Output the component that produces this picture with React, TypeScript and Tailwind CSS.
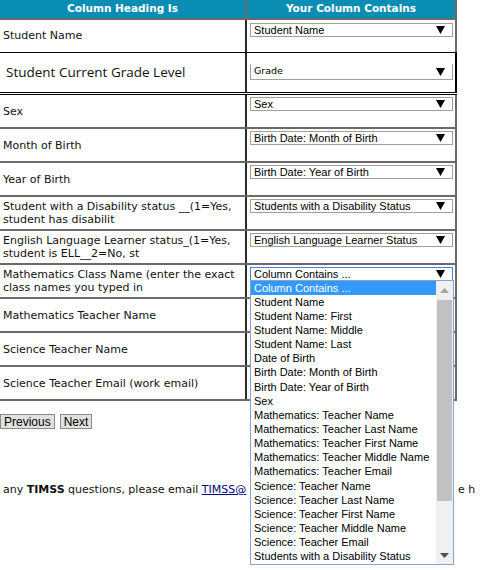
import React from "react";

const verdana = { fontFamily: '"DejaVu Sans", Verdana, sans-serif' };
const arial = { fontFamily: '"Liberation Sans", Arial, sans-serif' };

function Arrow() {
  return (
    <svg width="9" height="8" viewBox="0 0 9 8" className="shrink-0">
      <polygon points="0,0 9,0 4.5,8" fill="#000" />
    </svg>
  );
}

function Sel({ label, focused }: { label: string; focused?: boolean }) {
  return (
    <div
      style={arial}
      className={`flex h-[14px] w-[203px] items-center justify-between bg-white pl-[3px] pr-[7px] text-[11px] leading-none text-black ${
        focused ? "border border-[#4a82d8]" : "border border-[#a0a0a0]"
      }`}
    >
      <span className="whitespace-nowrap">{label}</span>
      <Arrow />
    </div>
  );
}

const rows: { label: React.ReactNode; sel: string }[] = [
  { label: "Sex", sel: "Sex" },
  { label: "Month of Birth", sel: "Birth Date: Month of Birth" },
  { label: "Year of Birth", sel: "Birth Date: Year of Birth" },
  {
    label: (
      <>
        Student with a Disability status __(1=Yes,
        <br />
        student has disabilit
      </>
    ),
    sel: "Students with a Disability Status",
  },
  {
    label: (
      <>
        English Language Learner status_(1=Yes,
        <br />
        student is ELL__2=No, st
      </>
    ),
    sel: "English Language Learner Status",
  },
];

const options = [
  "Column Contains ...",
  "Student Name",
  "Student Name: First",
  "Student Name: Middle",
  "Student Name: Last",
  "Date of Birth",
  "Birth Date: Month of Birth",
  "Birth Date: Year of Birth",
  "Sex",
  "Mathematics: Teacher Name",
  "Mathematics: Teacher Last Name",
  "Mathematics: Teacher First Name",
  "Mathematics: Teacher Middle Name",
  "Mathematics: Teacher Email",
  "Science: Teacher Name",
  "Science: Teacher Last Name",
  "Science: Teacher First Name",
  "Science: Teacher Middle Name",
  "Science: Teacher Email",
  "Students with a Disability Status",
];

function DropList() {
  return (
    <div
      style={arial}
      className="absolute left-0 top-[13px] z-10 flex h-[285px] w-[204px] border border-[#8aa3cc] bg-white text-[11px] text-black"
    >
      <div className="flex flex-1 flex-col">
        {options.map((o, i) => (
          <div
            key={o}
            className={`flex h-[14.15px] items-center whitespace-nowrap pl-[3px] leading-none ${
              i === 0 ? "bg-[#3399ff] text-white" : ""
            }`}
          >
            {o}
          </div>
        ))}
      </div>
      <div className="flex w-[17px] flex-col items-center bg-[#f0f0f0]">
        <div className="flex h-[18px] items-center justify-center">
          <svg width="9" height="5" viewBox="0 0 9 5">
            <polygon points="0,5 9,5 4.5,0" fill="#a3a3a3" />
          </svg>
        </div>
        <div className="mt-[1px] h-[201px] w-[15px] bg-[#c1c1c1]" />
        <div className="flex-1" />
        <div className="flex h-[18px] items-center justify-center">
          <svg width="9" height="5" viewBox="0 0 9 5">
            <polygon points="0,0 9,0 4.5,5" fill="#505050" />
          </svg>
        </div>
      </div>
    </div>
  );
}

function Row({
  label,
  right,
  h,
  leftClass,
}: {
  label: React.ReactNode;
  right: React.ReactNode;
  h: string;
  leftClass?: string;
}) {
  return (
    <div className={`flex ${h} border-b-2 border-[#6a6a6a]`}>
      <div
        style={verdana}
        className={`flex w-[247px] items-center border-r-2 border-[#2a2a2a] pl-[3px] text-[11px] leading-[13px] text-[#111] ${leftClass ?? ""}`}
      >
        <div>{label}</div>
      </div>
      <div className="w-[210px] border-r-2 border-[#6a6a6a] pl-[3px] pt-[2px]">{right}</div>
    </div>
  );
}

export default function App() {
  return (
    <div className="relative h-[570px] w-[488px] overflow-hidden bg-white">
      <div className="w-[457px]">
        {/* header */}
        <div
          style={verdana}
          className="flex h-[20px] border-b-2 border-[#6a6a6a] bg-[#0a8db3] text-[10.5px] font-bold text-white"
        >
          <div className="flex w-[247px] items-center justify-center border-r-2 border-[#6a6a6a]">
            Column Heading Is
          </div>
          <div className="flex w-[210px] items-center justify-center border-r-2 border-[#6a6a6a]">
            Your Column Contains
          </div>
        </div>

        {/* Student Name */}
        <div className="flex h-[33px] border-b border-black">
          <div
            style={verdana}
            className="flex w-[247px] items-center border-r-2 border-[#2a2a2a] pl-[3px] text-[11px] text-[#111]"
          >
            Student Name
          </div>
          <div className="w-[210px] border-r-2 border-[#6a6a6a] pl-[3px] pt-[3px]">
            <Sel label="Student Name" />
          </div>
        </div>

        {/* Student Current Grade Level */}
        <div className="flex h-[42px] border-b-[3px] border-double border-black">
          <div
            style={{ fontFamily: '"Open Sans", "Segoe UI", sans-serif' }}
            className="flex w-[247px] items-center border-r-2 border-[#2a2a2a] pl-[6px] text-[13.5px] text-[#111]"
          >
            Student Current Grade Level
          </div>
          <div className="w-[210px] border-r-2 border-black pl-[3px] pt-[11px]">
            <div
              style={verdana}
              className="flex h-[16px] w-[203px] items-center justify-between border-x border-b border-[#a0a0a0] bg-white pl-[3px] pr-[7px] text-[9.5px] text-black"
            >
              <span>Grade</span>
              <Arrow />
            </div>
          </div>
        </div>

        {rows.map((r, i) => (
          <Row key={i} label={r.label} right={<Sel label={r.sel} />} h="h-[34px]" />
        ))}

        <Row
          label={
            <>
              Mathematics Class Name (enter the exact
              <br />
              class names you typed in
            </>
          }
          right={
            <div className="relative">
              <Sel label="Column Contains ..." focused />
              <DropList />
            </div>
          }
          h="h-[34px]"
        />
        <Row label="Mathematics Teacher Name" right={null} h="h-[34px]" />
        <Row label="Science Teacher Name" right={null} h="h-[34px]" />
        <Row label="Science Teacher Email (work email)" right={null} h="h-[34px]" />
      </div>

      <div style={arial} className="mt-[13px] flex gap-[5px] text-[12px] text-black">
        <button className="h-[15px] border border-[#8a8a8a] bg-[#e1e1e1] px-[3px] leading-none">
          Previous
        </button>
        <button className="h-[15px] border border-[#8a8a8a] bg-[#e1e1e1] px-[3px] leading-none">
          Next
        </button>
      </div>

      <div
        style={verdana}
        className="mt-[53px] flex whitespace-nowrap pl-[3px] text-[11px] text-[#111]"
      >
        <span className="w-[455px] shrink-0">
          any <b>TIMSS</b> questions, please email{" "}
          <a className="text-[#000080] underline">TIMSS@</a>
        </span>
        <span>e h</span>
      </div>
    </div>
  );
}
